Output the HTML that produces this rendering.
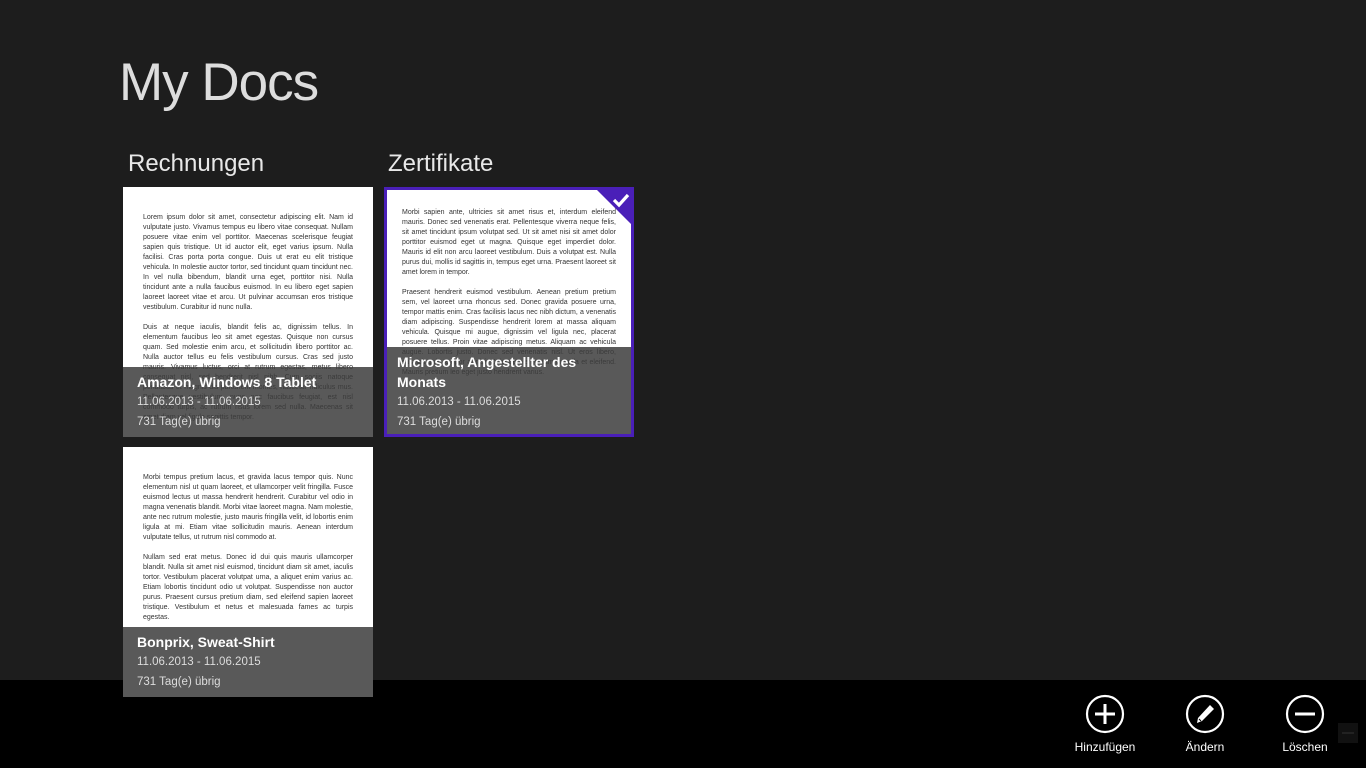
<!DOCTYPE html>
<html><head><meta charset="utf-8"><style>
*{margin:0;padding:0;box-sizing:border-box}
body{width:1366px;height:768px;background:#1d1d1d;font-family:"Liberation Sans",sans-serif;position:relative;overflow:hidden;color:#fff}
h1{position:absolute;left:119px;top:52px;font-size:53px;font-weight:normal;color:#ddd;letter-spacing:-1px}
.grp{position:absolute;top:150px;font-size:24px;color:#e8e8e8}
.tile{position:absolute;width:250px;height:250px;background:#fff;overflow:hidden;z-index:2}
.doc{position:absolute;left:20px;right:20px;top:26px;font-size:7px;line-height:10px;color:#333;text-align:justify}
.doc p{margin-bottom:10px}
.ov{position:absolute;left:0;right:0;bottom:0;background:rgba(60,60,60,.85);padding:5px 14px 0 14px}
.ov b{display:block;font-size:14px;line-height:20px;color:#fff}
.ov span{display:block;font-size:11.5px;line-height:20px;color:#ddd}
.sel{border:3px solid #4a1fb8}
.bar{position:absolute;left:0;top:680px;width:1366px;height:88px;background:#000;z-index:1}
.btn{position:absolute;top:14px;width:100px;text-align:center;font-size:12px;color:#fff}
.btn svg{display:block;margin:0 auto 6px}
</style></head><body>
<h1>My Docs</h1>
<div class="grp" style="left:128px">Rechnungen</div>
<div class="grp" style="left:388px">Zertifikate</div>

<div class="tile" style="left:123px;top:187px">
<div class="doc"><p>Lorem ipsum dolor sit amet, consectetur adipiscing elit. Nam id vulputate justo. Vivamus tempus eu libero vitae consequat. Nullam posuere vitae enim vel porttitor. Maecenas scelerisque feugiat sapien quis tristique. Ut id auctor elit, eget varius ipsum. Nulla facilisi. Cras porta porta congue. Duis ut erat eu elit tristique vehicula. In molestie auctor tortor, sed tincidunt quam tincidunt nec. In vel nulla bibendum, blandit urna eget, porttitor nisi. Nulla tincidunt ante a nulla faucibus euismod. In eu libero eget sapien laoreet laoreet vitae et arcu. Ut pulvinar accumsan eros tristique vestibulum. Curabitur id nunc nulla.</p><p>Duis at neque iaculis, blandit felis ac, dignissim tellus. In elementum faucibus leo sit amet egestas. Quisque non cursus quam. Sed molestie enim arcu, et sollicitudin libero porttitor ac. Nulla auctor tellus eu felis vestibulum cursus. Cras sed justo mauris. Vivamus luctus, orci at rutrum egestas, metus libero consequat nisl, sed hendrerit nisl nibh. Cum sociis natoque penatibus et magnis dis parturient montes, nascetur ridiculus mus. Pellentesque vestibulum, nunc nec faucibus feugiat, est nisl commodo turpis, ac rutrum risus lorem sed nulla. Maecenas sit amet diam vel ligula sagittis tempor.</p></div>
<div class="ov" style="height:70px"><b>Amazon, Windows 8 Tablet</b><span>11.06.2013 - 11.06.2015</span><span>731 Tag(e) übrig</span></div>
</div>

<div class="tile sel" style="left:384px;top:187px">
<div class="doc" style="left:15px;right:15px;top:18px"><p>Morbi sapien ante, ultricies sit amet risus et, interdum eleifend mauris. Donec sed venenatis erat. Pellentesque viverra neque felis, sit amet tincidunt ipsum volutpat sed. Ut sit amet nisi sit amet dolor porttitor euismod eget ut magna. Quisque eget imperdiet dolor. Mauris id elit non arcu laoreet vestibulum. Duis a volutpat est. Nulla purus dui, mollis id sagittis in, tempus eget urna. Praesent laoreet sit amet lorem in tempor.</p><p>Praesent hendrerit euismod vestibulum. Aenean pretium pretium sem, vel laoreet urna rhoncus sed. Donec gravida posuere urna, tempor mattis enim. Cras facilisis lacus nec nibh dictum, a venenatis diam adipiscing. Suspendisse hendrerit lorem at massa aliquam vehicula. Quisque mi augue, dignissim vel ligula nec, placerat posuere tellus. Proin vitae adipiscing metus. Aliquam ac vehicula augue. Lobortis justo. Donec sed venenatis nisl. Ut eros libero, suscipit quis tempor at nisi. Quisque elementum in nulla et eleifend. Mauris pretium leo eget justo hendrerit varius.</p></div>
<div class="ov" style="height:87px;padding-left:10px"><b>Microsoft, Angestellter des Monats</b><span>11.06.2013 - 11.06.2015</span><span>731 Tag(e) übrig</span></div>
<svg style="position:absolute;right:0;top:0" width="34" height="34"><polygon points="0,0 34,0 34,34" fill="#4a1fb8"/><path d="M17 10 L22 15 L31 5" stroke="#fff" stroke-width="3.2" fill="none"/></svg>
</div>

<div class="tile" style="left:123px;top:447px">
<div class="doc"><p>Morbi tempus pretium lacus, et gravida lacus tempor quis. Nunc elementum nisl ut quam laoreet, et ullamcorper velit fringilla. Fusce euismod lectus ut massa hendrerit hendrerit. Curabitur vel odio in magna venenatis blandit. Morbi vitae laoreet magna. Nam molestie, ante nec rutrum molestie, justo mauris fringilla velit, id lobortis enim ligula at mi. Etiam vitae sollicitudin mauris. Aenean interdum vulputate tellus, ut rutrum nisl commodo at.</p><p>Nullam sed erat metus. Donec id dui quis mauris ullamcorper blandit. Nulla sit amet nisl euismod, tincidunt diam sit amet, iaculis tortor. Vestibulum placerat volutpat urna, a aliquet enim varius ac. Etiam lobortis tincidunt odio ut volutpat. Suspendisse non auctor purus. Praesent cursus pretium diam, sed eleifend sapien laoreet tristique. Vestibulum et netus et malesuada fames ac turpis egestas.</p></div>
<div class="ov" style="height:70px"><b>Bonprix, Sweat-Shirt</b><span>11.06.2013 - 11.06.2015</span><span>731 Tag(e) übrig</span></div>
</div>

<div class="bar">
<div class="btn" style="left:1055px"><svg width="40" height="40"><circle cx="20" cy="20" r="18" stroke="#fff" stroke-width="2.2" fill="none"/><path d="M20 10V30M10 20H30" stroke="#fff" stroke-width="3"/></svg>Hinzufügen</div>
<div class="btn" style="left:1155px"><svg width="40" height="40"><circle cx="20" cy="20" r="18" stroke="#fff" stroke-width="2.2" fill="none"/><path d="M25 11 L29 15 L17 27 L12 29 L13 24 Z" fill="#fff"/><path d="M14 25 L16 27" stroke="#000" stroke-width="1"/></svg>Ändern</div>
<div class="btn" style="left:1255px"><svg width="40" height="40"><circle cx="20" cy="20" r="18" stroke="#fff" stroke-width="2.2" fill="none"/><path d="M10 20H30" stroke="#fff" stroke-width="3"/></svg>Löschen</div>
<div style="position:absolute;left:1338px;top:43px;width:20px;height:20px;background:#111"><div style="margin:9px 4px;height:2px;background:#222"></div></div>
</div>
</body></html>
